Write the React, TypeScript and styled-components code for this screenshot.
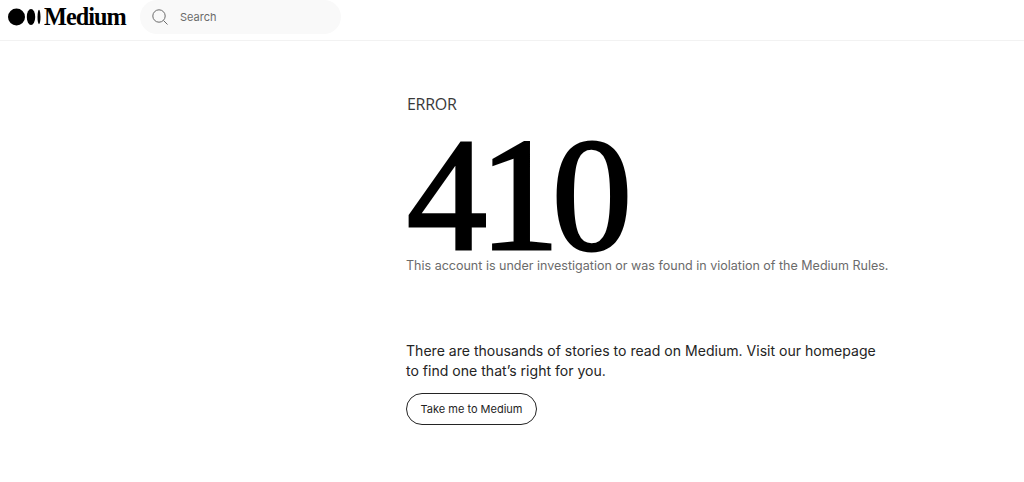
import React from 'react';
import styled, { createGlobalStyle } from 'styled-components';

const GlobalStyle = createGlobalStyle`
  html, body {
    margin: 0;
    padding: 0;
    background: #fff;
    font-family: 'Inter', 'Liberation Sans', sans-serif;
  }
`;

const Page = styled.div`
  width: 1024px;
  height: 482px;
  overflow: hidden;
`;

const Header = styled.header`
  display: flex;
  align-items: flex-start;
  box-sizing: border-box;
  height: 41px;
  padding-left: 8px;
  border-bottom: 1px solid #f2f2f2;
`;

const Logo = styled.div`
  display: flex;
  align-items: center;
  gap: 3px;
  width: 132px;
  height: 34px;
`;

const Wordmark = styled.span`
  display: inline-block;
  font-family: 'Liberation Serif', serif;
  font-weight: 700;
  font-size: 25px;
  letter-spacing: -1px;
  color: #000;
  line-height: 20px;
  transform: scaleX(0.97);
  transform-origin: left center;
`;

const SearchBox = styled.div`
  display: flex;
  align-items: center;
  gap: 12px;
  box-sizing: border-box;
  width: 201px;
  height: 34px;
  padding-left: 12px;
  border-radius: 17px;
  background: #f9f9f9;
`;

const SearchLabel = styled.span`
  font-size: 11px;
  color: #6b6b6b;
`;

const Main = styled.main`
  padding: 53px 0 0 406px;
  width: 490px;
`;

const ErrorLabel = styled.div`
  padding-left: 1px;
  font-family: 'Open Sans', 'Liberation Sans', sans-serif;
  font-size: 16px;
  line-height: 20px;
  letter-spacing: -0.3px;
  color: #3a3a3a;
`;

const Code = styled.div`
  margin-top: 6px;
  height: 138px;
  padding-left: 1px;
  font-family: 'Liberation Serif', serif;
  font-size: 160px;
  line-height: 150px;
  letter-spacing: -7.5px;
  color: #000;
  -webkit-text-stroke: 3px #000;
`;

const Note = styled.p`
  margin: 0;
  font-size: 12.52px;
  line-height: 16px;
  color: #6b6b6b;
  white-space: nowrap;
`;

const Blurb = styled.p`
  margin: 67px 0 0;
  width: 480px;
  font-size: 14.07px;
  line-height: 20px;
  color: #242424;
`;

const HomeButton = styled.button`
  display: block;
  margin-top: 12px;
  width: 131px;
  height: 32px;
  padding: 0;
  border: 1px solid #242424;
  border-radius: 16px;
  background: #fff;
  font-family: inherit;
  font-size: 11px;
  color: #242424;
  cursor: pointer;
`;

const App: React.FC = () => (
  <Page>
    <GlobalStyle />
    <Header>
      <Logo>
        <svg width="33" height="18" viewBox="0 0 33 18" aria-hidden="true">
          <circle cx="8.5" cy="9" r="8.5" fill="#000" />
          <ellipse cx="23" cy="9" rx="4.2" ry="8" fill="#000" />
          <ellipse cx="31" cy="9" rx="1.5" ry="7.2" fill="#000" />
        </svg>
        <Wordmark>Medium</Wordmark>
      </Logo>
      <SearchBox>
        <svg width="16" height="16" viewBox="0 0 16 16" fill="none" stroke="#6b6b6b" strokeWidth="1" aria-hidden="true">
          <circle cx="7" cy="7" r="6.2" />
          <path d="M11.5 11.5 L15.5 15.5" />
        </svg>
        <SearchLabel>Search</SearchLabel>
      </SearchBox>
    </Header>
    <Main>
      <ErrorLabel>ERROR</ErrorLabel>
      <Code>410</Code>
      <Note>This account is under investigation or was found in violation of the Medium Rules.</Note>
      <Blurb>There are thousands of stories to read on Medium. Visit our homepage to find one that’s right for you.</Blurb>
      <HomeButton>Take me to Medium</HomeButton>
    </Main>
  </Page>
);

export default App;
